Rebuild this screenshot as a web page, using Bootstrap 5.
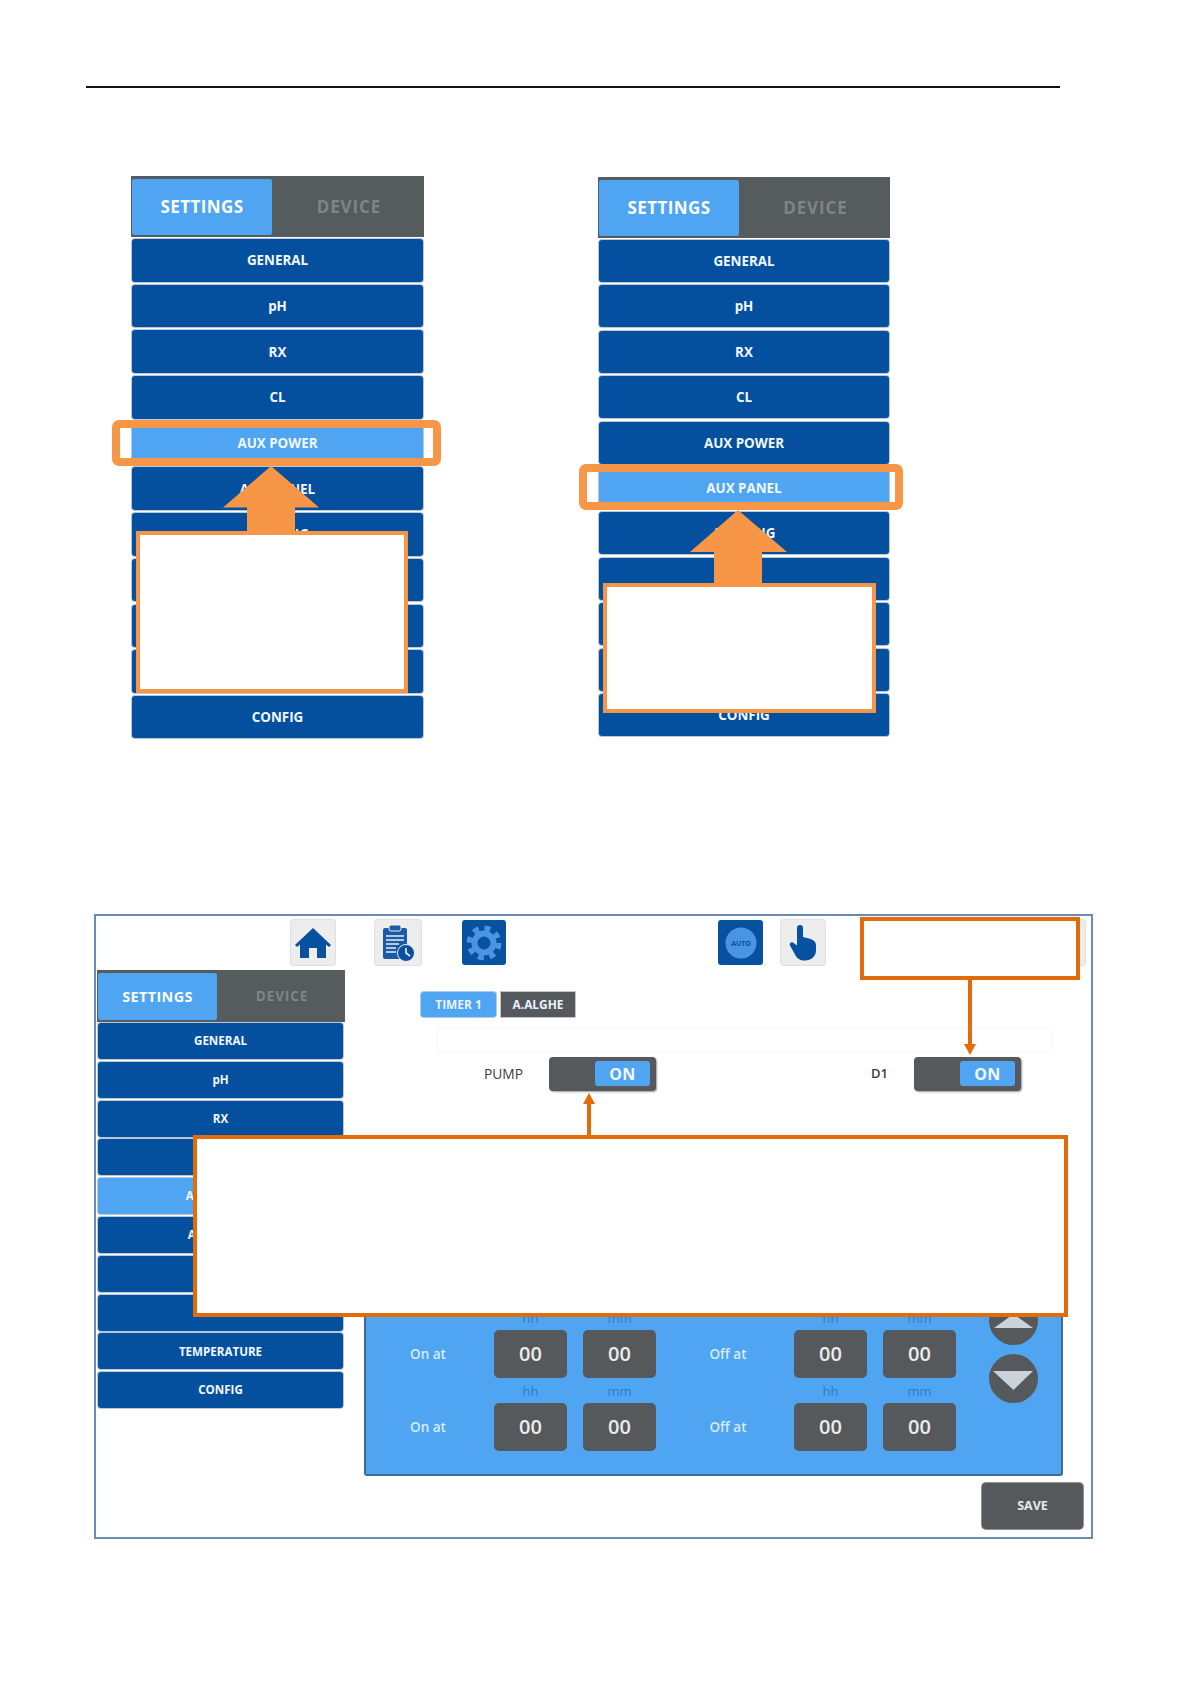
<!DOCTYPE html>
<html lang="en">
<head>
  <meta charset="UTF-8" />
  <meta name="viewport" content="width=device-width, initial-scale=1" />
  <title>Settings manual page</title>
  <link rel="stylesheet" href="https://cdn.jsdelivr.net/npm/bootstrap@5.3.0/dist/css/bootstrap.min.css" />
  <style>
    body { margin: 0; background: #fff; font-family: "Open Sans", "Liberation Sans", sans-serif; }
    .doc-page { width: 1191px; height: 1684px; overflow: hidden; }
    .top-rule { height: 2px; width: 974px; margin: 86px 0 0 86px; background: #111; }
    .shots { height: 562px; margin: 88px 0 0 131px; gap: 174px; }

    /* settings menu */
    .shot { position: relative; width: 293px; }
    .shot-b { width: 292px; margin-top: 1px; }
    .tab-bar { height: 61px; background: #565b5e; padding: 3px 0 2px 1px; }
    .tab-on, .tab-off { width: 140px; font-size: 17px; font-weight: 700; letter-spacing: .4px; }
    .tab-on { background: #4fa5f2; color: #fff; border-radius: 2px; }
    .tab-off { flex: 1; padding-left: 2px; color: #7e8487; letter-spacing: .9px; }
    .menu-rows { margin: 2px 1px 0; gap: 3.2px; }
    .shot-b .menu-rows { gap: 3.4px; }
    .menu-row { height: 42.5px; background: #04509e; color: #f2f8ff; border-radius: 3px; box-shadow: 0 0 0 1px #bcc7d4; font-size: 13.4px; font-weight: 700; }
    .shot-b .menu-row { height: 42px; }
    .menu-row.row-on { background: #4fa5f2; }

    /* orange marks */
    .mark-frame { position: absolute; border: 8px solid #f79646; border-radius: 7px; }
    .mark-arrow { position: absolute; }
    .mark-box { position: absolute; background: #fff; border: 4px solid #f79646; }
    .note-box { position: absolute; background: #fff; border: 4px solid #e36c0a; }

    /* controller screen */
    .screen { position: relative; width: 999px; height: 625px; margin: 176px 0 0 94px; border: 2px solid #6a8ab8; }
    .ico-bar { height: 54px; padding: 4px 0 0 195px; }
    .ico-btn { width: 44px; height: 45px; border-radius: 3px; background: #ededed; box-shadow: 0 0 0 1px #e0e0e0; }
    .ico-btn.ico-on { background: #07519f; box-shadow: none; }
    .ico-2 { margin-left: 40px; width: 46px; }
    .ico-3 { margin-left: 41px; }
    .ico-4 { margin-left: 212px; width: 45px; }
    .ico-5 { margin-left: 18px; }
    .ico-6 { margin-left: 216px; }
    .auto-txt { font: 700 7px "Open Sans", sans-serif; fill: #0b4f9a; }

    .side { width: 248px; margin-left: 1px; }
    .side .tab-bar { height: 52px; padding: 3px 0 2px 1px; }
    .side .tab-on { width: 119px; font-size: 14.4px; }
    .side .tab-off { font-size: 13.6px; }
    .side .menu-rows { margin: 1px 2px 0 1px; gap: 2.8px; }
    .side .menu-row { height: 36px; font-size: 11.6px; }

    .work { margin-left: 19px; width: 727px; }
    .sub-tabs { padding: 22px 0 0 57px; gap: 5px; }
    .sub-on, .sub-off { height: 25px; width: 75px; font-size: 11.9px; font-weight: 700; color: #e9f3fc; }
    .sub-on { background: #4fa5f2; border-radius: 3px; box-shadow: 0 0 0 1px #a8cdee; }
    .sub-off { background: #55595c; width: 74px; box-shadow: 0 0 0 1px #c5c5c5; }
    .faint-row { height: 25px; width: 615px; margin: 11px 0 0 73px; border: 1px solid #f6f6f6; }
    .switch-row { height: 34px; margin-top: 4px; }
    .sw-name { font-size: 13.8px; color: #3c3c3c; width: 38px; text-align: center; margin-left: 120px; }
    .sw-name.sw-d1 { margin-left: 215px; width: 16px; font-size: 13px; font-weight: 600; }
    .switch { width: 107px; height: 34px; margin-left: 27px; padding: 4px 6px 5px 46px; background: #55595c; border-radius: 4px; box-shadow: 1px 1px 2px #9a9a9a; }
    .sw-on { width: 100%; height: 100%; background: #4fa5f2; border-radius: 3px; color: #f2f8ff; font-size: 16px; font-weight: 700; letter-spacing: .5px; }

    .time-panel { width: 699px; height: 184px; margin-top: 201px; padding: 13px 0 0 0; background: #4fa5f2; border: 2px solid #3f6a94; border-top: 0; border-radius: 0 0 3px 3px; }
    .time-rows { width: 590px; }
    .time-row { height: 73px; }
    .time-lbl { width: 129px; height: 48px; padding-right: 4px; color: #d6ecff; font-size: 13.5px; font-weight: 600; }
    .time-lbl.lbl-off { width: 139px; padding: 0 0 0 6px; }
    .time-pair { gap: 16px; }
    .time-fld { width: 73px; }
    .time-cap { height: 25px; line-height: 26px; font-size: 13px; color: #2f7cc9; text-align: center; }
    .time-val { height: 48px; background: #55595c; border-radius: 5px; color: #ececec; font-size: 20px; font-weight: 600; }
    .arrows { margin: -9px 0 0 33px; gap: 9px; }
    .save-btn { width: 101px; height: 46px; margin: 7px 0 0 618px; border: 0; border-radius: 4px; background: #55595c; color: #e9e9e9; font-size: 12.5px; font-weight: 700; box-shadow: 0 0 0 1px #8e9296; }
  </style>
</head>
<body>
  <div class="doc-page">
    <div class="top-rule"></div>

    <div class="shots d-flex align-items-start">
      <!-- Aux power -->
      <div class="shot">
        <div class="tab-bar d-flex">
          <div class="tab-on d-flex align-items-center justify-content-center">SETTINGS</div>
          <div class="tab-off d-flex align-items-center justify-content-center">DEVICE</div>
        </div>
        <div class="menu-rows d-flex flex-column">
          <div class="menu-row d-flex align-items-center justify-content-center">GENERAL</div>
          <div class="menu-row d-flex align-items-center justify-content-center">pH</div>
          <div class="menu-row d-flex align-items-center justify-content-center">RX</div>
          <div class="menu-row d-flex align-items-center justify-content-center">CL</div>
          <div class="menu-row row-on d-flex align-items-center justify-content-center">AUX POWER</div>
          <div class="menu-row d-flex align-items-center justify-content-center">AUX PANEL</div>
          <div class="menu-row d-flex align-items-center justify-content-center">A.TIMING</div>
          <div class="menu-row"></div>
          <div class="menu-row"></div>
          <div class="menu-row"></div>
          <div class="menu-row d-flex align-items-center justify-content-center">CONFIG</div>
        </div>
        <div class="mark-frame" style="left:-19px;top:243.5px;width:329px;height:46.5px"></div>
        <svg class="mark-arrow" style="left:92px;top:290px" width="96" height="66" viewBox="0 0 96 66"><polygon fill="#f79646" points="48,0 96,41.5 72,41.5 72,66 24,66 24,41.5 0,41.5"/></svg>
        <div class="mark-box" style="left:5px;top:355px;width:272px;height:162px"></div>
      </div>

      <!-- Aux panel -->
      <div class="shot shot-b">
        <div class="tab-bar d-flex">
          <div class="tab-on d-flex align-items-center justify-content-center">SETTINGS</div>
          <div class="tab-off d-flex align-items-center justify-content-center">DEVICE</div>
        </div>
        <div class="menu-rows d-flex flex-column">
          <div class="menu-row d-flex align-items-center justify-content-center">GENERAL</div>
          <div class="menu-row d-flex align-items-center justify-content-center">pH</div>
          <div class="menu-row d-flex align-items-center justify-content-center">RX</div>
          <div class="menu-row d-flex align-items-center justify-content-center">CL</div>
          <div class="menu-row d-flex align-items-center justify-content-center">AUX POWER</div>
          <div class="menu-row row-on d-flex align-items-center justify-content-center">AUX PANEL</div>
          <div class="menu-row d-flex align-items-center justify-content-center">A.TIMING</div>
          <div class="menu-row"></div>
          <div class="menu-row"></div>
          <div class="menu-row"></div>
          <div class="menu-row d-flex align-items-center justify-content-center">CONFIG</div>
        </div>
        <div class="mark-frame" style="left:-19px;top:287px;width:324px;height:46px"></div>
        <svg class="mark-arrow" style="left:92px;top:333px" width="97" height="74" viewBox="0 0 97 74"><polygon fill="#f79646" points="48,0 97,42 72,42 72,74 24,74 24,42 0,42"/></svg>
        <div class="mark-box" style="left:5px;top:405.5px;width:273px;height:130.5px"></div>
      </div>
    </div>

    <!-- Timer screen -->
    <div class="screen">
      <div class="ico-bar d-flex align-items-start">
        <div class="ico-btn d-flex align-items-center justify-content-center">
          <svg width="36" height="32" viewBox="0 0 36 32"><path fill="#07519f" d="M18 1 L36 18 L34 20 L31 17.5 V31 H22 V21 H14 V31 H5 V17.5 L2 20 L0 18 Z"/></svg>
        </div>
        <div class="ico-btn ico-2 d-flex align-items-center justify-content-center">
          <svg width="34" height="38" viewBox="0 0 34 38">
            <rect x="2" y="4" width="24" height="31" rx="2" fill="#1a5ba5"/>
            <rect x="8" y="1" width="12" height="6" rx="2" fill="#1a5ba5" stroke="#ededed" stroke-width="1"/>
            <path d="M5 12H23M5 16H23M5 20H18M5 24H15M5 28H15" stroke="#ededed" stroke-width="1.6"/>
            <circle cx="25" cy="29" r="8.5" fill="#07519f" stroke="#ededed" stroke-width="1"/>
            <path d="M25 24V29L29 32" stroke="#ededed" stroke-width="1.6" fill="none"/>
          </svg>
        </div>
        <div class="ico-btn ico-3 ico-on d-flex align-items-center justify-content-center">
          <svg width="38" height="38" viewBox="0 0 38 38">
            <circle cx="19" cy="19" r="14.5" fill="none" stroke="#4a95e3" stroke-width="6" stroke-dasharray="5.7 5.7"/>
            <circle cx="19" cy="19" r="9.5" fill="none" stroke="#4a95e3" stroke-width="6"/>
          </svg>
        </div>
        <div class="ico-btn ico-4 ico-on d-flex align-items-center justify-content-center">
          <svg width="36" height="36" viewBox="0 0 36 36">
            <circle cx="18" cy="18" r="15.5" fill="#4a95e3"/>
            <text class="auto-txt" x="18" y="20.5" text-anchor="middle">AUTO</text>
          </svg>
        </div>
        <div class="ico-btn ico-5 d-flex align-items-center justify-content-center">
          <svg width="28" height="38" viewBox="0 0 28 38"><path fill="#07519f" d="M8 4 a3 3 0 0 1 6 0 V13 l6 1.5 c4 1 7 3 7 7 v5 c0 6 -5 10 -11 10 c-5 0 -8 -2 -10 -6 l-5 -9 c-1 -2 1 -4 3 -3 l4 3 Z"/></svg>
        </div>
        <div class="ico-btn ico-6"></div>
      </div>

      <div class="d-flex align-items-start">
        <div class="side">
          <div class="tab-bar d-flex">
            <div class="tab-on d-flex align-items-center justify-content-center">SETTINGS</div>
            <div class="tab-off d-flex align-items-center justify-content-center">DEVICE</div>
          </div>
          <div class="menu-rows d-flex flex-column">
            <div class="menu-row d-flex align-items-center justify-content-center">GENERAL</div>
            <div class="menu-row d-flex align-items-center justify-content-center">pH</div>
            <div class="menu-row d-flex align-items-center justify-content-center">RX</div>
            <div class="menu-row"></div>
            <div class="menu-row row-on d-flex align-items-center justify-content-center">AUX POWER</div>
            <div class="menu-row d-flex align-items-center justify-content-center">AUX PANEL</div>
            <div class="menu-row"></div>
            <div class="menu-row"></div>
            <div class="menu-row d-flex align-items-center justify-content-center">TEMPERATURE</div>
            <div class="menu-row d-flex align-items-center justify-content-center">CONFIG</div>
          </div>
        </div>

        <div class="work">
          <div class="sub-tabs d-flex">
            <div class="sub-on d-flex align-items-center justify-content-center">TIMER 1</div>
            <div class="sub-off d-flex align-items-center justify-content-center">A.ALGHE</div>
          </div>
          <div class="faint-row"></div>
          <div class="switch-row d-flex align-items-center">
            <div class="sw-name">PUMP</div>
            <div class="switch"><div class="sw-on d-flex align-items-center justify-content-center">ON</div></div>
            <div class="sw-name sw-d1">D1</div>
            <div class="switch"><div class="sw-on d-flex align-items-center justify-content-center">ON</div></div>
          </div>

          <div class="time-panel d-flex">
            <div class="time-rows">
              <div class="time-row d-flex align-items-end">
                <div class="time-lbl d-flex align-items-center justify-content-center">On at</div>
                <div class="time-pair d-flex">
                  <div class="time-fld"><div class="time-cap">hh</div><div class="time-val d-flex align-items-center justify-content-center">00</div></div>
                  <div class="time-fld"><div class="time-cap">mm</div><div class="time-val d-flex align-items-center justify-content-center">00</div></div>
                </div>
                <div class="time-lbl lbl-off d-flex align-items-center justify-content-center">Off at</div>
                <div class="time-pair d-flex">
                  <div class="time-fld"><div class="time-cap">hh</div><div class="time-val d-flex align-items-center justify-content-center">00</div></div>
                  <div class="time-fld"><div class="time-cap">mm</div><div class="time-val d-flex align-items-center justify-content-center">00</div></div>
                </div>
              </div>
              <div class="time-row d-flex align-items-end">
                <div class="time-lbl d-flex align-items-center justify-content-center">On at</div>
                <div class="time-pair d-flex">
                  <div class="time-fld"><div class="time-cap">hh</div><div class="time-val d-flex align-items-center justify-content-center">00</div></div>
                  <div class="time-fld"><div class="time-cap">mm</div><div class="time-val d-flex align-items-center justify-content-center">00</div></div>
                </div>
                <div class="time-lbl lbl-off d-flex align-items-center justify-content-center">Off at</div>
                <div class="time-pair d-flex">
                  <div class="time-fld"><div class="time-cap">hh</div><div class="time-val d-flex align-items-center justify-content-center">00</div></div>
                  <div class="time-fld"><div class="time-cap">mm</div><div class="time-val d-flex align-items-center justify-content-center">00</div></div>
                </div>
              </div>
            </div>
            <div class="arrows d-flex flex-column align-self-start">
              <svg width="49" height="49" viewBox="0 0 49 49"><circle cx="24.5" cy="24.5" r="24.5" fill="#55595c"/><polygon points="24.5,18 44,32 5,32" fill="#ccd2da"/></svg>
              <svg width="49" height="49" viewBox="0 0 49 49"><circle cx="24.5" cy="24.5" r="24.5" fill="#55595c"/><polygon points="4,17 44,17 24.5,36" fill="#ccd2da"/></svg>
            </div>
          </div>
          <button type="button" class="save-btn d-block">SAVE</button>
        </div>
      </div>

      <div class="note-box" style="left:764px;top:1px;width:220px;height:63px"></div>
      <svg class="mark-arrow" style="left:868px;top:64px" width="12" height="75" viewBox="0 0 12 75"><path fill="#e36c0a" d="M4 0H8V64H12L6 75L0 64H4Z"/></svg>
      <div class="note-box" style="left:97px;top:219px;width:875px;height:182px"></div>
      <svg class="mark-arrow" style="left:487px;top:177px" width="12" height="42" viewBox="0 0 12 42"><path fill="#e36c0a" d="M6 0L12 11H8V42H4V11H0Z"/></svg>
    </div>
  </div>
  <script src="https://cdn.jsdelivr.net/npm/bootstrap@5.3.0/dist/js/bootstrap.bundle.min.js"></script>
</body>
</html>
